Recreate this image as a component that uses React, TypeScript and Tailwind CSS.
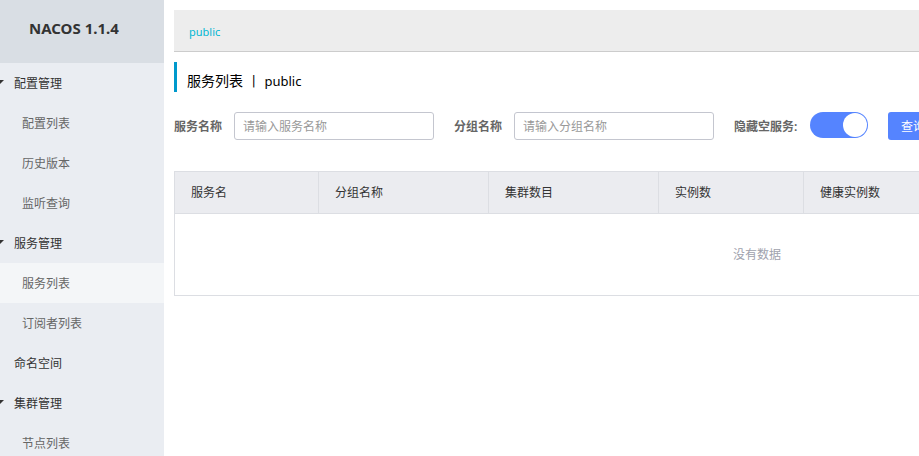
import { useState } from "react";

type MenuItem = { label: string; level: "group" | "page" | "top"; active?: boolean };

const menu: MenuItem[] = [
  { label: "配置管理", level: "group" },
  { label: "配置列表", level: "page" },
  { label: "历史版本", level: "page" },
  { label: "监听查询", level: "page" },
  { label: "服务管理", level: "group" },
  { label: "服务列表", level: "page", active: true },
  { label: "订阅者列表", level: "page" },
  { label: "命名空间", level: "top" },
  { label: "集群管理", level: "group" },
  { label: "节点列表", level: "page" },
];

const columns = [
  { label: "服务名", width: "w-36" },
  { label: "分组名称", width: "w-[170px]" },
  { label: "集群数目", width: "w-[170px]" },
  { label: "实例数", width: "w-[145px]" },
  { label: "健康实例数", width: "" },
];

function Sidebar() {
  return (
    <aside className="w-41 shrink-0 bg-[#eaedf2]">
      <h1 className="flex h-[63px] items-center bg-[#d9dee4] pb-2 pl-[29px] font-['Noto_Sans',sans-serif] text-[15px] font-bold text-[#333]">
        NACOS 1.1.4
      </h1>
      <nav>
        <ul>
          {menu.map(({ label, level, active }) => (
            <li key={label}>
              {level === "group" ? (
                <button type="button" className="flex h-10 w-full items-center gap-2.5 pt-0.5 text-[#333]">
                  <svg className="mb-1 h-1 w-1" viewBox="0 0 4 4" fill="#333" aria-hidden="true">
                    <path d="M0 0H4L0 4Z" />
                  </svg>
                  {label}
                </button>
              ) : (
                <a
                  href="#"
                  className={`flex h-10 items-center pt-0.5 ${level === "top" ? "pl-3.5 text-[#333]" : "pl-[22px] text-[#666]"} ${active ? "bg-[#f4f6f8]" : ""}`}
                >
                  {label}
                </a>
              )}
            </li>
          ))}
        </ul>
      </nav>
    </aside>
  );
}

function Field({ id, label, placeholder }: { id: string; label: string; placeholder: string }) {
  return (
    <div className="flex items-center gap-3">
      <label htmlFor={id} className="pt-0.5 font-bold text-[#666]">
        {label}
      </label>
      <input
        id={id}
        type="text"
        placeholder={placeholder}
        className="h-7 w-50 rounded-[3px] border border-[#c4c6cf] bg-white px-2 pt-0.5 text-[#333] placeholder:text-[#999]"
      />
    </div>
  );
}

export default function App() {
  const [hideEmpty, setHideEmpty] = useState(true);

  return (
    <div className="flex h-screen overflow-hidden bg-white font-[Roboto,'Noto_Sans_CJK_SC',sans-serif] text-xs text-[#333]">
      <Sidebar />
      <main className="min-w-0 flex-1 overflow-hidden pt-2.5 pl-2.5">
        <div className="flex h-[42px] items-center border-b border-[#ccc] bg-[#ededed] pt-1 pl-[15px]">
          <a href="#" className="font-['Noto_Sans',sans-serif] text-[11px] text-[#00b7d3]">
            public
          </a>
        </div>

        <h2 className="mt-2.5 flex h-[30px] items-center gap-[9px] border-l-3 border-[#09c] pt-2 pl-2.5 text-sm text-black">
          <span>服务列表</span>
          <span>|</span>
          <span className="font-['Noto_Sans',sans-serif] text-[13px]">public</span>
        </h2>

        <form className="mt-5 flex h-7 items-center gap-5 whitespace-nowrap" onSubmit={(e) => e.preventDefault()}>
          <Field id="service-name" label="服务名称" placeholder="请输入服务名称" />
          <Field id="group-name" label="分组名称" placeholder="请输入分组名称" />
          <div className="flex items-center gap-3">
            <label htmlFor="hide-empty" className="w-16 pt-0.5 font-bold text-[#666]">
              隐藏空服务:
            </label>
            <input
              id="hide-empty"
              type="checkbox"
              role="switch"
              checked={hideEmpty}
              onChange={(e) => setHideEmpty(e.target.checked)}
              className="mb-0.5 flex h-6.5 w-[58px] appearance-none items-center rounded-full bg-[#ccc] p-px before:size-6 before:rounded-full before:bg-white checked:justify-end checked:bg-[#5584ff]"
            />
          </div>
          <button type="submit" className="h-7 shrink-0 rounded-[3px] bg-[#5584ff] px-[13px] pt-0.5 text-white">
            查询
          </button>
        </form>

        <table className="mt-[31px] w-full min-w-[1166px] table-fixed border-collapse border border-[#dcdee3]">
          <thead>
            <tr className="h-[42px] bg-[#ebecf0]">
              {columns.map(({ label, width }) => (
                <th key={label} scope="col" className={`border border-[#dcdee3] px-4 text-left font-normal ${width}`}>
                  {label}
                </th>
              ))}
            </tr>
          </thead>
          <tbody>
            <tr className="h-[82px]">
              <td colSpan={5} className="text-center text-[#a0a2ad]">
                没有数据
              </td>
            </tr>
          </tbody>
        </table>
      </main>
    </div>
  );
}
